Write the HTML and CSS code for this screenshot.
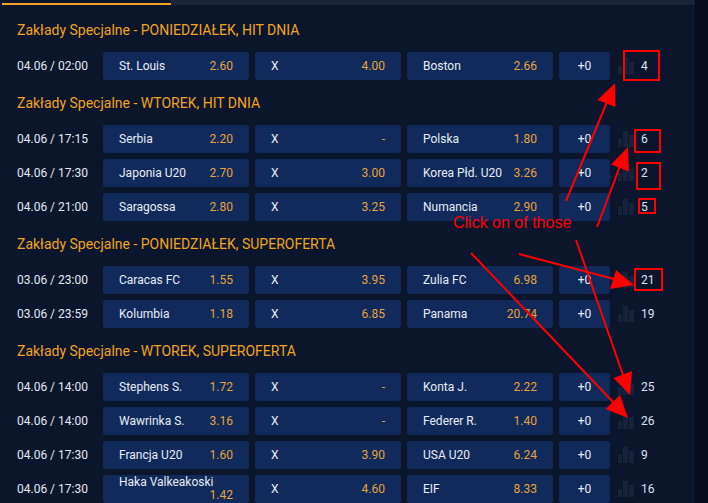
FILE: index.html
```html
<!DOCTYPE html>
<html lang="pl">
<head>
<meta charset="utf-8">
<link rel="stylesheet" href="styles.css">
</head>
<body>
<div class="page">
  <main class="main">
    <div class="tabs">
      <div class="tab active"></div>
      <div class="tab rest"></div>
    </div>
    <div class="content">
      <section class="section">
        <h2 class="heading">Zakłady Specjalne - PONIEDZIAŁEK, HIT DNIA</h2>
        <div class="row">
          <div class="date">04.06 / 02:00</div>
          <div class="btn"><span class="name">St. Louis</span><span class="odd">2.60</span></div>
          <div class="btn"><span class="name">X</span><span class="odd">4.00</span></div>
          <div class="btn"><span class="name">Boston</span><span class="odd">2.66</span></div>
          <div class="btn more">+0</div>
          <div class="stats"><span class="bars"><i class="b1"></i><i class="b2"></i><i class="b3"></i></span><span class="num">4</span></div>
        </div>
      </section>
      <section class="section">
        <h2 class="heading">Zakłady Specjalne - WTOREK, HIT DNIA</h2>
        <div class="row">
          <div class="date">04.06 / 17:15</div>
          <div class="btn"><span class="name">Serbia</span><span class="odd">2.20</span></div>
          <div class="btn"><span class="name">X</span><span class="odd">-</span></div>
          <div class="btn"><span class="name">Polska</span><span class="odd">1.80</span></div>
          <div class="btn more">+0</div>
          <div class="stats"><span class="bars"><i class="b1"></i><i class="b2"></i><i class="b3"></i></span><span class="num">6</span></div>
        </div>
        <div class="row">
          <div class="date">04.06 / 17:30</div>
          <div class="btn"><span class="name">Japonia U20</span><span class="odd">2.70</span></div>
          <div class="btn"><span class="name">X</span><span class="odd">3.00</span></div>
          <div class="btn"><span class="name">Korea Płd. U20</span><span class="odd">3.26</span></div>
          <div class="btn more">+0</div>
          <div class="stats"><span class="bars"><i class="b1"></i><i class="b2"></i><i class="b3"></i></span><span class="num">2</span></div>
        </div>
        <div class="row">
          <div class="date">04.06 / 21:00</div>
          <div class="btn"><span class="name">Saragossa</span><span class="odd">2.80</span></div>
          <div class="btn"><span class="name">X</span><span class="odd">3.25</span></div>
          <div class="btn"><span class="name">Numancia</span><span class="odd">2.90</span></div>
          <div class="btn more">+0</div>
          <div class="stats"><span class="bars"><i class="b1"></i><i class="b2"></i><i class="b3"></i></span><span class="num">5</span></div>
        </div>
      </section>
      <section class="section">
        <h2 class="heading">Zakłady Specjalne - PONIEDZIAŁEK, SUPEROFERTA</h2>
        <div class="row">
          <div class="date">03.06 / 23:00</div>
          <div class="btn"><span class="name">Caracas FC</span><span class="odd">1.55</span></div>
          <div class="btn"><span class="name">X</span><span class="odd">3.95</span></div>
          <div class="btn"><span class="name">Zulia FC</span><span class="odd">6.98</span></div>
          <div class="btn more">+0</div>
          <div class="stats"><span class="bars"><i class="b1"></i><i class="b2"></i><i class="b3"></i></span><span class="num">21</span></div>
        </div>
        <div class="row">
          <div class="date">03.06 / 23:59</div>
          <div class="btn"><span class="name">Kolumbia</span><span class="odd">1.18</span></div>
          <div class="btn"><span class="name">X</span><span class="odd">6.85</span></div>
          <div class="btn"><span class="name">Panama</span><span class="odd">20.74</span></div>
          <div class="btn more">+0</div>
          <div class="stats"><span class="bars"><i class="b1"></i><i class="b2"></i><i class="b3"></i></span><span class="num">19</span></div>
        </div>
      </section>
      <section class="section">
        <h2 class="heading">Zakłady Specjalne - WTOREK, SUPEROFERTA</h2>
        <div class="row">
          <div class="date">04.06 / 14:00</div>
          <div class="btn"><span class="name">Stephens S.</span><span class="odd">1.72</span></div>
          <div class="btn"><span class="name">X</span><span class="odd">-</span></div>
          <div class="btn"><span class="name">Konta J.</span><span class="odd">2.22</span></div>
          <div class="btn more">+0</div>
          <div class="stats"><span class="bars"><i class="b1"></i><i class="b2"></i><i class="b3"></i></span><span class="num">25</span></div>
        </div>
        <div class="row">
          <div class="date">04.06 / 14:00</div>
          <div class="btn"><span class="name">Wawrinka S.</span><span class="odd">3.16</span></div>
          <div class="btn"><span class="name">X</span><span class="odd">-</span></div>
          <div class="btn"><span class="name">Federer R.</span><span class="odd">1.40</span></div>
          <div class="btn more">+0</div>
          <div class="stats"><span class="bars"><i class="b1"></i><i class="b2"></i><i class="b3"></i></span><span class="num">26</span></div>
        </div>
        <div class="row">
          <div class="date">04.06 / 17:30</div>
          <div class="btn"><span class="name">Francja U20</span><span class="odd">1.60</span></div>
          <div class="btn"><span class="name">X</span><span class="odd">3.90</span></div>
          <div class="btn"><span class="name">USA U20</span><span class="odd">6.24</span></div>
          <div class="btn more">+0</div>
          <div class="stats"><span class="bars"><i class="b1"></i><i class="b2"></i><i class="b3"></i></span><span class="num">9</span></div>
        </div>
        <div class="row">
          <div class="date">04.06 / 17:30</div>
          <div class="btn"><span class="name">Haka Valkeakoski</span><span class="odd">1.42</span></div>
          <div class="btn"><span class="name">X</span><span class="odd">4.60</span></div>
          <div class="btn"><span class="name">EIF</span><span class="odd">8.33</span></div>
          <div class="btn more">+0</div>
          <div class="stats"><span class="bars"><i class="b1"></i><i class="b2"></i><i class="b3"></i></span><span class="num">16</span></div>
        </div>
      </section>
    </div>
  </main>
  <aside class="edge"></aside>

  <svg class="annot" width="708" height="503" viewBox="0 0 708 503">
    <g fill="none" stroke="#ff0000" stroke-width="2">
      <rect x="624" y="51" width="35" height="29"/>
      <rect x="635" y="130" width="25" height="22"/>
      <rect x="637" y="163" width="23" height="26"/>
      <rect x="639" y="199" width="16" height="14"/>
      <rect x="635" y="269" width="27" height="21"/>
      <line x1="566" y1="201" x2="607" y2="102"/>
      <line x1="597" y1="227" x2="620" y2="166"/>
      <line x1="519" y1="254" x2="614" y2="279"/>
      <line x1="576" y1="240" x2="623" y2="375"/>
      <line x1="471" y1="253" x2="614" y2="403"/>
    </g>
    <g fill="#ff0000">
      <polygon points="615,83 615.5,107 597.5,100"/>
      <polygon points="628,147 629,171.5 611,164.5"/>
      <polygon points="634,285 610,289 616,270"/>
      <polygon points="630,395 613.5,378 632,371"/>
      <polygon points="628,418 605.5,409 620,395"/>
    </g>
    <text class="note" x="453" y="228">Click on of those</text>
  </svg>
</div>
</body>
</html>
```
FILE: styles.css
```css
* { box-sizing: border-box; }
html, body {
  margin: 0;
  padding: 0;
  background: #0b162d;
  height: 100%;
  overflow: hidden;
}
.page {
  position: relative;
  display: flex;
  width: 708px;
  height: 503px;
  font-family: Roboto, "Liberation Sans", sans-serif;
}
.main {
  width: 695px;
  padding-left: 2px;
  background: #0b162d;
  border-left: 0;
}
.edge {
  flex: 1;
  background: #060c19;
}
.tabs {
  display: flex;
  height: 5px;
}
.tab.active {
  width: 169px;
  border-bottom: 2px solid #f2a31d;
}
.tab.rest {
  flex: 1;
  background: #1b2539;
}
.content {
  padding: 2px 0 0 15px;
}
.section {
  display: flex;
  flex-direction: column;
  gap: 6px;
}
.heading {
  margin: 0 0 -6px;
  height: 45px;
  display: flex;
  align-items: center;
  font-size: 14px;
  font-weight: 400;
  color: #f2a31d;
  letter-spacing: 0;
}
.row {
  display: grid;
  grid-template-columns: 80px 146px 146px 146px 51px auto;
  column-gap: 6px;
  height: 28px;
  font-size: 12px;
  line-height: 13px;
}
.date {
  display: flex;
  align-items: center;
  color: #e4e8ef;
}
.btn {
  background: #0f2a5b;
  border-radius: 3px;
  padding: 0 16px;
  display: flex;
  flex-wrap: wrap;
  align-items: center;
  align-content: center;
  color: #e8edf5;
}
.name { white-space: nowrap; }
.odd {
  margin-left: auto;
  color: #e9a23a;
  white-space: nowrap;
}
.btn.more {
  justify-content: center;
  padding: 0;
}
.stats {
  margin-left: 2px;
  display: flex;
  align-items: center;
  color: #dfe3ea;
}
.bars {
  display: flex;
  align-items: flex-end;
  gap: 1px;
  height: 16px;
  width: 16px;
  margin-right: 7px;
}
.bars i {
  display: block;
  width: 4px;
  background: #17233a;
}
.bars .b1 { height: 8px; }
.bars .b2 { height: 16px; width: 5px; }
.bars .b3 { height: 12px; width: 5px; }
.annot {
  position: absolute;
  left: 0;
  top: 0;
  pointer-events: none;
}
.note {
  font-family: "Liberation Sans", Arial, sans-serif;
  font-size: 16px;
  fill: #ff0000;
}
```
